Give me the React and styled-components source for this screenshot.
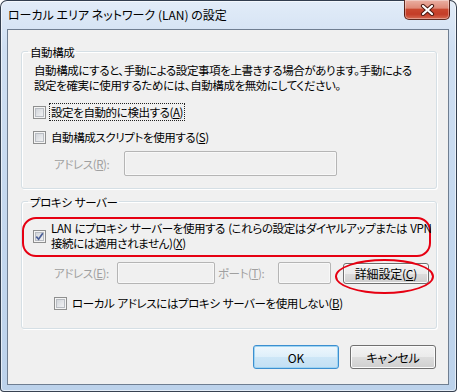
import styled, { createGlobalStyle } from "styled-components";

const GlobalStyle = createGlobalStyle`
  html, body {
    margin: 0;
    background: #fff;
  }
  body {
    font-family: "Noto Sans CJK JP", "Noto Sans", sans-serif;
    font-size: 11.5px;
    letter-spacing: -0.4px;
    word-spacing: 1px;
    font-feature-settings: "palt";
    color: #000;
  }
`;

const Window = styled.div`
  box-sizing: border-box;
  width: 457px;
  height: 392px;
  display: flex;
  flex-direction: column;
  padding: 0 7px 6px 6px;
  border: 1px solid rgba(25, 35, 50, 0.85);
  border-radius: 7px 7px 4px 4px;
  background: linear-gradient(#e2ecf8 0%, #cfdff2 12%, #c3d7ee 60%, #bcd2eb 100%);
  box-shadow: inset 0 0 0 1px rgba(255, 255, 255, 0.6);
`;

const TitleBar = styled.div`
  height: 28px;
  flex: none;
  display: flex;
  align-items: flex-start;
  justify-content: space-between;
`;

const Title = styled.div`
  margin: 6px 0 0 1px;
  line-height: 16px;
  font-size: 12px;
  letter-spacing: 0;
  word-spacing: 0;
`;

const CloseButton = styled.div`
  box-sizing: border-box;
  width: 46px;
  height: 20px;
  margin: -1px -1px 0 0;
  display: grid;
  place-items: center;
  border: 1px solid rgba(70, 20, 12, 0.85);
  border-top: none;
  border-radius: 0 0 5px 5px;
  background: linear-gradient(#eab0a3 0%, #df8a78 42%, #c9472f 50%, #c43d28 75%, #d66a52 100%);
  box-shadow: inset 0 0 0 1px rgba(255, 255, 255, 0.35);
`;

const Client = styled.div`
  flex: 1;
  display: flex;
  flex-direction: column;
  padding: 0 11px 0 13px;
  border: 1px solid #6f7e91;
  background: #f0f0f0;
`;

const Group = styled.fieldset`
  margin: ${(p) => p.$top}px 0 0;
  padding: 0;
  min-width: 0;
  border: 1px solid #d5dfe5;
  border-radius: 3px;
  box-shadow: inset 1px 1px 0 #fff, 1px 1px 0 #fff;
`;

const Legend = styled.legend`
  margin-left: 6px;
  padding: 2px 2px 0;
  line-height: 16px;
`;

const Description = styled.p`
  margin: 3px 0 0 12px;
  line-height: 15px;
  white-space: nowrap;
`;

const CheckRow = styled.div`
  display: flex;
  align-items: center;
  gap: 3px;
  height: 18px;
  margin: ${(p) => p.$top}px 0 ${(p) => p.$bottom || 0}px ${(p) => p.$left}px;
`;

const Box = styled.span`
  box-sizing: border-box;
  flex: none;
  width: 13px;
  height: 13px;
  display: grid;
  place-items: center;
  border: 1px solid #8e8f8f;
  background: linear-gradient(135deg, #c9cdd3 0%, #e4e6e9 55%, #f8f8f8 100%);
  box-shadow: inset 0 0 0 1px #f4f4f4, inset 0 0 0 2px #b8bcc2;
`;

const Label = styled.span`
  box-sizing: border-box;
  line-height: 16px;
  padding: 0 1px;
  border: 1px ${(p) => (p.$focus ? "dotted #222" : "solid transparent")};
  white-space: nowrap;
`;

const FieldRow = styled.div`
  display: flex;
  align-items: center;
  margin: ${(p) => p.$top}px 0 ${(p) => p.$bottom || 0}px 32px;
`;

const FieldLabel = styled.span`
  flex: none;
  width: ${(p) => p.$w}px;
  margin-left: ${(p) => p.$ml || 0}px;
  color: #a0a0a0;
  white-space: nowrap;
`;

const TextBox = styled.div`
  box-sizing: border-box;
  flex: none;
  width: ${(p) => p.$w}px;
  height: ${(p) => p.$h}px;
  border: 1px solid #b5b5b5;
  border-radius: 2px;
  background: #f0f0f0;
  box-shadow: inset 0 0 0 1px #f8f8f8;
`;

const Highlight = styled.div`
  margin: 7px 5px 0 0;
  padding: 2px 0 4px 9px;
  border: 2px solid #e60012;
  border-radius: 14px;
  display: flex;
  align-items: center;
  gap: 5px;
`;

const MultiLabel = styled.span`
  line-height: 15px;
  white-space: nowrap;
`;

const Circled = styled.div`
  position: relative;
  margin-left: 12px;
  &::after {
    content: "";
    position: absolute;
    inset: -4px -5px -10px -8px;
    border: 2px solid #e60012;
    border-radius: 50%;
    pointer-events: none;
  }
`;

const Button = styled.button`
  box-sizing: border-box;
  width: 86px;
  height: ${(p) => p.$h}px;
  padding: 0;
  font: inherit;
  font-size: 12px;
  letter-spacing: -0.2px;
  color: #000;
  border: 1px solid ${(p) => (p.$default ? "#3c8fd0" : "#707070")};
  border-radius: 3px;
  background: ${(p) =>
    p.$default
      ? "linear-gradient(#eef7fd 0%, #deeffa 50%, #cde6f7 50%, #c3e0f4 100%)"
      : "linear-gradient(#f3f3f3 0%, #ebebeb 50%, #dddddd 50%, #cfcfcf 100%)"};
  box-shadow: inset 0 0 0 1px ${(p) => (p.$default ? "#9fd4f2" : "#fbfbfb")};
`;

const Footer = styled.div`
  display: flex;
  justify-content: flex-end;
  gap: 11px;
  margin: 16px 1px 0 0;
`;

function CheckBox({ checked }) {
  return (
    <Box>
      {checked && (
        <svg width="9" height="9" viewBox="0 0 9 9">
          <path d="M1.3 4.6 L3.6 7.2 L7.8 1.2" fill="none" stroke="#4a5e97" strokeWidth="1.7" />
        </svg>
      )}
    </Box>
  );
}

export default function App() {
  return (
    <>
      <GlobalStyle />
      <Window>
        <TitleBar>
          <Title>ローカル エリア ネットワーク (LAN) の設定</Title>
          <CloseButton>
            <svg width="15" height="12" viewBox="0 0 15 12">
              <path d="M3 2 L12 10 M12 2 L3 10" stroke="#4a1a12" strokeWidth="4.2" strokeLinecap="round" />
              <path d="M3 2 L12 10 M12 2 L3 10" stroke="#fff" strokeWidth="2.2" strokeLinecap="round" />
            </svg>
          </CloseButton>
        </TitleBar>
        <Client>
          <Group $top={12}>
            <Legend>自動構成</Legend>
            <Description>
              自動構成にすると、手動による設定事項を上書きする場合があります。手動による
              <br />
              設定を確実に使用するためには、自動構成を無効にしてください。
            </Description>
            <CheckRow $top={10} $left={11}>
              <CheckBox />
              <Label $focus>
                設定を自動的に検出する(<u>A</u>)
              </Label>
            </CheckRow>
            <CheckRow $top={7} $left={11}>
              <CheckBox />
              <Label>
                自動構成スクリプトを使用する(<u>S</u>)
              </Label>
            </CheckRow>
            <FieldRow $top={5} $bottom={12}>
              <FieldLabel $w={70}>
                アドレス(<u>R</u>):
              </FieldLabel>
              <TextBox $w={213} $h={25} />
            </FieldRow>
          </Group>
          <Group $top={3}>
            <Legend>プロキシ サーバー</Legend>
            <Highlight>
              <CheckBox checked />
              <MultiLabel>
                LAN にプロキシ サーバーを使用する (これらの設定はダイヤルアップまたは VPN
                <br />
                接続には適用されません)(<u>X</u>)
              </MultiLabel>
            </Highlight>
            <FieldRow $top={5}>
              <FieldLabel $w={63}>
                アドレス(<u>E</u>):
              </FieldLabel>
              <TextBox $w={98} $h={22} />
              <FieldLabel $w={60} $ml={3}>
                ポート(<u>T</u>):
              </FieldLabel>
              <TextBox $w={53} $h={22} />
              <Circled>
                <Button $h={21}>
                  詳細設定(<u>C</u>)
                </Button>
              </Circled>
            </FieldRow>
            <CheckRow $top={10} $left={32} $bottom={16}>
              <CheckBox />
              <Label>
                ローカル アドレスにはプロキシ サーバーを使用しない(<u>B</u>)
              </Label>
            </CheckRow>
          </Group>
          <Footer>
            <Button $h={24} $default>
              OK
            </Button>
            <Button $h={24}>キャンセル</Button>
          </Footer>
        </Client>
      </Window>
    </>
  );
}
